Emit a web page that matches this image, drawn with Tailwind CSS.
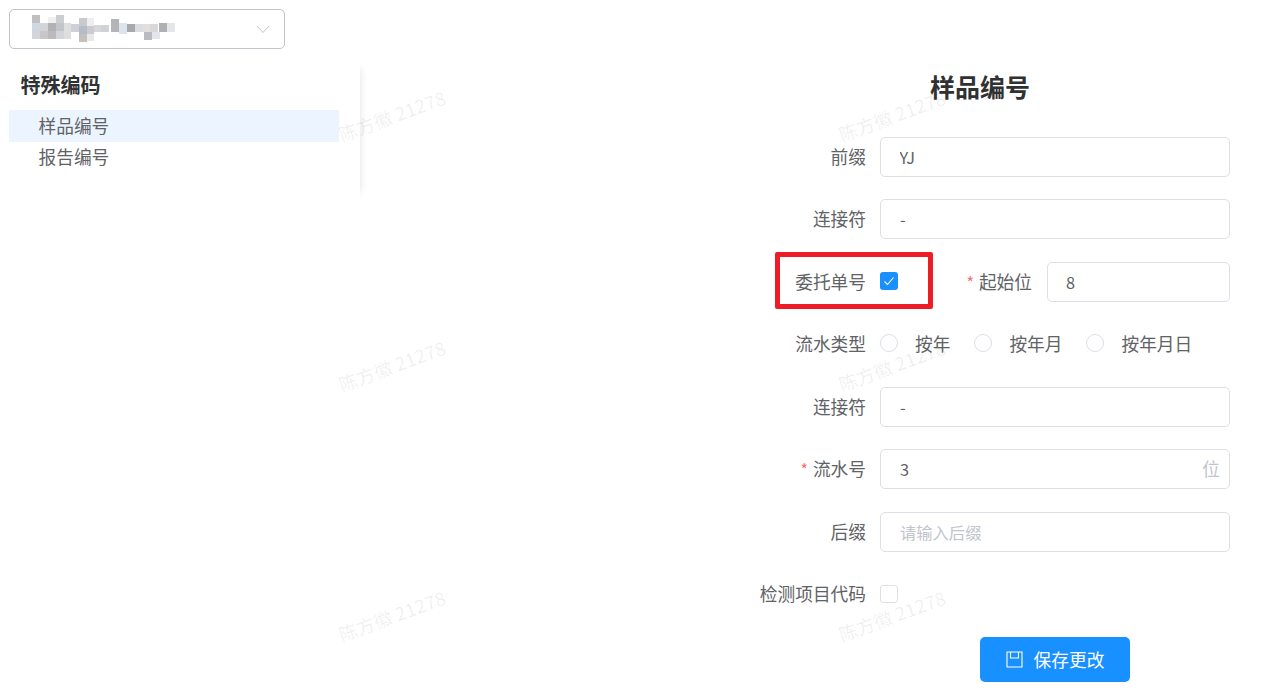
<!DOCTYPE html>
<html lang="zh-CN">
<head>
    <meta charset="UTF-8">
    <meta name="viewport" content="width=device-width, initial-scale=1.0">
    <title>特殊编码</title>
    <script src="https://cdn.jsdelivr.net/npm/@tailwindcss/browser@4"></script>
</head>
<body class="bg-white">
    <div class="relative h-[695px] w-[1270px] overflow-hidden font-['Noto_Sans_CJK_SC','Noto_Sans',sans-serif] text-[17.7px] text-[#606266]">
        <div class="flex">
            <!-- left column -->
            <aside class="w-[360px] shrink-0 pl-[9px] pt-[9px]">
                <div class="flex h-10 w-[276px] items-center justify-between rounded-[5px] border border-[#c0c4cc] pr-[13px] pl-[21px]">
                    <svg width="146" height="30" viewBox="0 0 146 30">
                        <g filter="blur(0.6px)">
                            <rect x="1" y="1" width="8" height="8" fill="#c0c0c2"/>
                            <rect x="1" y="9" width="8" height="8" fill="#ccd8e4"/>
                            <rect x="1" y="17" width="8" height="8" fill="#d2d4d8"/>
                            <rect x="9" y="9" width="8" height="8" fill="#d4d4d6"/>
                            <rect x="9" y="17" width="8" height="8" fill="#c8c6c6"/>
                            <rect x="17" y="3" width="8" height="6" fill="#f0f0f0"/>
                            <rect x="17" y="9" width="8" height="8" fill="#b2b2b4"/>
                            <rect x="17" y="17" width="8" height="8" fill="#bcbaba"/>
                            <rect x="25" y="1" width="8" height="8" fill="#cdcdcf"/>
                            <rect x="25" y="9" width="8" height="8" fill="#c2c6ca"/>
                            <rect x="25" y="17" width="8" height="8" fill="#d2d4d8"/>
                            <rect x="33" y="9" width="7" height="16" fill="#dcdee0"/>
                            <rect x="40" y="10" width="8" height="8" fill="#cdd0d4"/>
                            <rect x="48" y="4" width="8" height="8" fill="#cacacd"/>
                            <rect x="48" y="12" width="8" height="8" fill="#b4bdc7"/>
                            <rect x="48" y="20" width="8" height="8" fill="#c4c0be"/>
                            <rect x="56" y="4" width="7" height="8" fill="#eeeeee"/>
                            <rect x="56" y="12" width="7" height="8" fill="#ccccd0"/>
                            <rect x="56" y="20" width="7" height="7" fill="#e8e8e8"/>
                            <rect x="63" y="11" width="7" height="7" fill="#d4d8dc"/>
                            <rect x="70" y="11" width="8" height="7" fill="#d0d2d6"/>
                            <rect x="80" y="5" width="8" height="13" fill="#b4b4b6"/>
                            <rect x="88" y="9" width="8" height="11" fill="#dce4ee"/>
                            <rect x="96" y="10" width="8" height="8" fill="#a8a9ad"/>
                            <rect x="104" y="10" width="8" height="8" fill="#dadde2"/>
                            <rect x="112" y="10" width="7" height="8" fill="#e2dfdc"/>
                            <rect x="119" y="10" width="8" height="8" fill="#d8d8d8"/>
                            <rect x="113" y="18" width="8" height="8" fill="#b8bcc2"/>
                            <rect x="121" y="18" width="8" height="7" fill="#e2e6ec"/>
                            <rect x="128" y="9" width="8" height="9" fill="#aeb0b4"/>
                            <rect x="136" y="9" width="8" height="9" fill="#e4e6e8"/>
                        </g>
                    </svg>
                    <svg width="16" height="16" viewBox="0 0 16 16" fill="none" stroke="#c0c4cc" stroke-width="1">
                        <path d="M2 5l6 6.5L14 5"/>
                    </svg>
                </div>
                <div class="mt-[11px] h-[140px] w-[351px] pt-[11px] pr-[21px] shadow-[8px_0_8px_-8px_rgba(0,0,0,0.12)]">
                    <h2 class="pl-[11.5px] text-[20px] leading-[28px] font-bold text-[#303133]">特殊编码</h2>
                    <ul class="mt-[11px]">
                        <li class="h-8 bg-[#ecf5ff] pb-[2px] pl-[29.5px] leading-[30px]">样品编号</li>
                        <li class="h-8 pb-[4px] pl-[29.5px] leading-[28px]">报告编号</li>
                    </ul>
                </div>
            </aside>

            <!-- form -->
            <main class="flex-1 pt-[66px]">
                <h1 class="ml-[570px] w-[100px] text-center text-[25px] leading-[40px] font-bold whitespace-nowrap text-[#303133]">样品编号</h1>
                <form class="mt-[31px] flex flex-col">
                    <div class="flex h-10 items-center">
                        <label class="w-[506px] pb-[2px] text-right">前缀</label>
                        <input value="YJ" class="ml-[14px] h-10 w-[350px] rounded-[5px] border border-[#dcdfe6] pl-[18.5px] text-[16.3px] outline-none">
                    </div>
                    <div class="mt-[22px] flex h-10 items-center">
                        <label class="w-[506px] pb-[2px] text-right">连接符</label>
                        <input value="-" class="ml-[14px] h-10 w-[350px] rounded-[5px] border border-[#dcdfe6] pl-[19px] text-[16.3px] outline-none">
                    </div>
                    <div class="mt-[23px] flex h-10 items-center">
                        <label class="w-[506px] pb-[2px] text-right">委托单号</label>
                        <span class="mb-[2px] ml-[14px] flex h-[18px] w-[18px] items-center justify-center rounded-[3px] bg-[#1890ff]">
                            <svg width="12" height="12" viewBox="0 0 12 12" fill="none" stroke="#fff" stroke-width="1.1"><path d="M1.5 6.5l3 3 6-7"/></svg>
                        </span>
                        <label class="ml-[68px] w-[66px] pb-[2px] text-right whitespace-nowrap"><span class="mr-[5px] text-[16px] text-[#f56c6c]">*</span>起始位</label>
                        <input value="8" class="ml-[15px] h-10 w-[183px] rounded-[5px] border border-[#dcdfe6] pl-[18px] text-[16.3px] outline-none">
                    </div>
                    <div class="mt-[21px] flex h-10 items-center">
                        <label class="w-[506px] text-right">流水类型</label>
                        <span class="ml-[14px] h-[18px] w-[18px] rounded-full border border-[#dcdfe6]"></span>
                        <span class="ml-[17px]">按年</span>
                        <span class="ml-[24px] h-[18px] w-[18px] rounded-full border border-[#dcdfe6]"></span>
                        <span class="ml-[17px]">按年月</span>
                        <span class="ml-[24px] h-[18px] w-[18px] rounded-full border border-[#dcdfe6]"></span>
                        <span class="ml-[17px]">按年月日</span>
                    </div>
                    <div class="mt-[24px] flex h-10 items-center">
                        <label class="w-[506px] pb-[2px] text-right">连接符</label>
                        <input value="-" class="ml-[14px] h-10 w-[350px] rounded-[5px] border border-[#dcdfe6] pl-[19px] text-[16.3px] outline-none">
                    </div>
                    <div class="mt-[22px] flex h-10 items-center">
                        <label class="w-[506px] pb-[2px] text-right whitespace-nowrap"><span class="mr-[5px] text-[16px] text-[#f56c6c]">*</span>流水号</label>
                        <div class="ml-[14px] flex h-10 w-[350px] items-center justify-between rounded-[5px] border border-[#dcdfe6] pr-[9px] pl-[19px]">
                            <input value="3" class="w-[200px] text-[16.3px] outline-none">
                            <span class="pb-[2px] text-[#c0c4cc]">位</span>
                        </div>
                    </div>
                    <div class="mt-[23px] flex h-10 items-center">
                        <label class="w-[506px] pb-[2px] text-right">后缀</label>
                        <input placeholder="请输入后缀" class="ml-[14px] h-10 w-[350px] rounded-[5px] border border-[#dcdfe6] pl-[19px] text-[16.3px] outline-none placeholder:text-[#c0c4cc]">
                    </div>
                    <div class="mt-[22px] flex h-10 items-center">
                        <label class="w-[506px] pb-[2px] text-right">检测项目代码</label>
                        <span class="mb-[1px] ml-[14px] h-[18px] w-[18px] rounded-[3px] border border-[#dcdfe6]"></span>
                    </div>
                    <button type="button" class="mt-[23px] ml-[620px] flex h-[45px] w-[150px] items-center justify-center gap-[11px] rounded-[5px] bg-[#1890ff] pb-[1px] text-white">
                        <svg width="17" height="17" viewBox="0 0 17 17" fill="none" stroke="#fff" stroke-width="1.1">
                            <path d="M1 1h15v15h-15z"/>
                            <path d="M4.5 1v6h8v-6"/>
                        </svg>
                        保存更改
                    </button>
                </form>
            </main>
        </div>

        <!-- red annotation -->
        <div class="pointer-events-none absolute top-[252px] left-[775px] h-[57px] w-[158px] rounded-[2px] border-[5px] border-[#ee1c25]"></div>

        <!-- watermarks -->
        <span class="pointer-events-none absolute top-[102px] left-[336px] w-[115px] -rotate-20 text-[18.5px] font-medium whitespace-nowrap text-black/[0.06]">陈方徽 21278</span>
        <span class="pointer-events-none absolute top-[102px] left-[836px] w-[115px] -rotate-20 text-[18.5px] font-medium whitespace-nowrap text-black/[0.06]">陈方徽 21278</span>
        <span class="pointer-events-none absolute top-[352px] left-[336px] w-[115px] -rotate-20 text-[18.5px] font-medium whitespace-nowrap text-black/[0.06]">陈方徽 21278</span>
        <span class="pointer-events-none absolute top-[352px] left-[836px] w-[115px] -rotate-20 text-[18.5px] font-medium whitespace-nowrap text-black/[0.06]">陈方徽 21278</span>
        <span class="pointer-events-none absolute top-[602px] left-[336px] w-[115px] -rotate-20 text-[18.5px] font-medium whitespace-nowrap text-black/[0.06]">陈方徽 21278</span>
        <span class="pointer-events-none absolute top-[602px] left-[836px] w-[115px] -rotate-20 text-[18.5px] font-medium whitespace-nowrap text-black/[0.06]">陈方徽 21278</span>
    </div>
</body>
</html>
